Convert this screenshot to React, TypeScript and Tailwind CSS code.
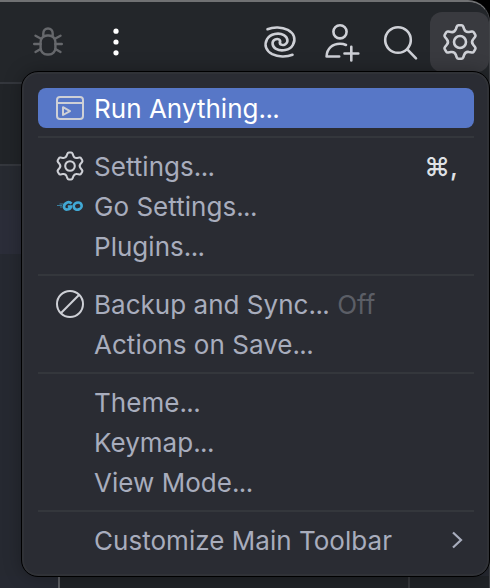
import React from "react";

type IconProps = { className?: string };

const gearPath = (() => {
  const lobe: [number, number][] = [
    [-4.2, -12.8], [-3.2, -15.5], [-2.7, -16.8], [-1.5, -16.8],
    [1.5, -16.8], [2.7, -16.8], [3.2, -15.5], [4.2, -12.8], [5.3, -9.5],
  ];
  let d = "";
  for (let k = 0; k < 6; k++) {
    const a = (k * Math.PI) / 3;
    const p = lobe.map(([x, y]) =>
      `${(x * Math.cos(a) - y * Math.sin(a)).toFixed(2)} ${(x * Math.sin(a) + y * Math.cos(a)).toFixed(2)}`);
    d += `${k === 0 ? "M" : ""}${p[0]} L${p[1]} Q${p[2]} ${p[3]} L${p[4]} Q${p[5]} ${p[6]} L${p[7]} Q${p[8]} `;
  }
  return d + "-4.2 -12.8Z";
})();

function Gear({ className }: IconProps) {
  return (
    <svg className={className} viewBox="-20 -20 40 40" fill="none" stroke="currentColor" strokeWidth="2.6" strokeLinejoin="round">
      <path d={gearPath} />
      <circle r="6" />
    </svg>
  );
}

function Bug() {
  return (
    <svg className="size-8" viewBox="0 0 32 32" fill="none" stroke="currentColor" strokeWidth="2.4" strokeLinecap="round">
      <path d="M11.3 9.500V7.500C11.300 4.500 13.200 2.500 16 2.500S20.700 4.500 20.700 7.500V9.500" />
      <rect x="8.600" y="9.500" width="14.800" height="19" rx="6.500" />
      <path d="M8.600 12.500L3.500 9.700M8.600 18H2.200M8.600 23L3.500 26M23.400 12.500L28.500 9.700M23.400 18H29.800M23.400 23L28.500 26" />
    </svg>
  );
}

function Spiral() {
  const arm = "M-12.500 -12.800C-6.500 -15.300 2 -15 7.800 -12.200C14 -9 16.200 -3 12.900 2.800C9.800 8.400 1.200 9.800 -3.900 6.900C-8.200 4.300 -8.500 -.500 -5.200 -2.300C-2.200 -3.900 .700 -2.500 0 0";
  return (
    <svg className="size-10" viewBox="-20 -20 40 40" fill="none" stroke="currentColor" strokeWidth="2.6" strokeLinecap="round">
      <path d={arm} />
      <path d={arm} transform="rotate(180)" />
    </svg>
  );
}

function AddUser() {
  return (
    <svg className="size-10" viewBox="0 0 40 40" fill="none" stroke="currentColor" strokeWidth="2.6" strokeLinecap="round" strokeLinejoin="round">
      <circle cx="18" cy="9.800" r="6.600" />
      <path d="M17.200 34.500H4.600C4.800 26.500 10.500 21.800 18 21.800C20.700 21.800 22.300 22.200 24 23M29.300 24.800V38.500M22.500 31.500H36.300" />
    </svg>
  );
}

function Search() {
  return (
    <svg className="size-10" viewBox="0 0 40 40" fill="none" stroke="currentColor" strokeWidth="2.6" strokeLinecap="round">
      <circle cx="18" cy="18" r="12.800" />
      <path d="M27.300 27.300L36 36.300" />
    </svg>
  );
}

function RunWindow() {
  return (
    <svg className="h-7 w-8 text-[#ced0d6]" viewBox="0 0 32 28" fill="none" stroke="currentColor" strokeWidth="2" strokeLinejoin="round">
      <rect x="3" y="3" width="26" height="22" rx="3" />
      <path d="M3 9H29M9 13.200V21L16 17.100Z" />
    </svg>
  );
}

function GoMark() {
  return (
    <svg className="h-6 w-8" viewBox="0 0 32 24" fill="none" stroke="#41a9d5">
      <path d="M3 11.500H8M5.500 10H9M6 13H8.500" strokeWidth="1" opacity=".65" />
      <path d="M17.500 9.700C14.800 6.600 10 9 10 12.700C10 16.600 16.200 16.400 17 12.500H13.800" strokeWidth="2.700" />
      <ellipse cx="23.700" cy="12.100" rx="4" ry="3.500" strokeWidth="2.700" transform="rotate(-20 23.700 12.100)" />
    </svg>
  );
}

function Disabled() {
  return (
    <svg className="size-8" viewBox="0 0 32 32" fill="none" stroke="currentColor" strokeWidth="2">
      <circle cx="16" cy="16" r="13" />
      <path d="M6.800 25.200L25.200 6.800" />
    </svg>
  );
}

type RowProps = { icon?: React.ReactNode; label: string; more?: boolean; selected?: boolean; children?: React.ReactNode };

function Row({ icon, label, more, selected, children }: RowProps) {
  return (
    <div className={`flex h-10 items-center rounded-lg px-4 ${selected ? "bg-[#5777c7] text-white" : "text-[#a8adbd]"}`}>
      <span className="mr-2 flex w-8 shrink-0 justify-center text-[#ced0d6]">{icon}</span>
      <span className="whitespace-nowrap pt-0.5">
        {label}
        {more && <span className="tracking-[-0.6px]">...</span>}
      </span>
      {children}
    </div>
  );
}

const Divider = () => <div className="my-2 h-0.5 bg-[#34373c]" />;

export default function App() {
  return (
    <div className="relative h-[588px] w-[490px] overflow-hidden bg-black font-['Inter',sans-serif]">
      <div className="flex h-[588px] flex-col overflow-hidden rounded-tr-[22px] border-t-2 border-r border-t-[#707173] border-r-[#414347] bg-[#212428]">
        <header className="flex h-[82px] shrink-0 items-start border-b-2 border-[#34373d] bg-[#23262a] text-[#ced0d6]">
          <div className="ml-8 mt-6 text-[#66686c]"><Bug /></div>
          <svg className="ml-11 mt-6 h-8 w-4 text-white" viewBox="0 0 16 32" fill="currentColor">
            <circle cx="8" cy="5.200" r="2.600" />
            <circle cx="8" cy="16" r="2.600" />
            <circle cx="8" cy="26.800" r="2.600" />
          </svg>
          <div className="ml-[136px] mt-5"><Spiral /></div>
          <div className="ml-[22px] mt-5"><AddUser /></div>
          <div className="ml-[18px] mt-5"><Search /></div>
          <div className="ml-[10px] mt-[10px] flex h-[60px] w-[59px] shrink-0 items-center justify-center rounded-xl bg-[#393a3f]">
            <Gear className="size-10" />
          </div>
        </header>
        <div className="h-[82px] shrink-0 border-b-2 border-[#34373d]" />
        <div className="h-11 shrink-0 bg-[#272a31]" />
        <div className="h-11 shrink-0 bg-[#2b2d39]" />
        <div className="grow bg-[#262931]" />
        <footer className="flex h-3 shrink-0">
          <div className="w-[58px] bg-[#262932]" />
          <div className="w-[350px] border-l-2 border-[#5a5c61] bg-[#202327]" />
          <div className="grow border-l-2 border-[#34363a] bg-[#202327]" />
        </footer>
      </div>
      <div className="absolute left-[21px] top-[71px] h-[506px] w-[469px] rounded-[17px] border border-black bg-[#2a2c33] py-4 pl-4 pr-[15px] text-[26px] font-[430] leading-10 tracking-[0.03px] shadow-[inset_0_0_0_2px_#303237,0_0_18px_rgba(0,0,0,0.28)]">
        <Row selected icon={<RunWindow />} label="Run Anything" more />
        <Divider />
        <Row icon={<Gear className="size-8" />} label="Settings" more>
          <span className="ml-auto pt-0.5 font-medium text-[#dfe1e5]">⌘,</span>
        </Row>
        <Row icon={<GoMark />} label="Go Settings" more />
        <Row label="Plugins" more />
        <Divider />
        <Row icon={<Disabled />} label="Backup and Sync" more>
          <span className="ml-2 pt-0.5 text-[#5b5e66]">Off</span>
        </Row>
        <Row label="Actions on Save" more />
        <Divider />
        <Row label="Theme" more />
        <Row label="Keymap" more />
        <Row label="View Mode" more />
        <Divider />
        <Row label="Customize Main Toolbar">
          <svg className="-mr-2 ml-auto h-5 w-4" viewBox="0 0 16 20" fill="none" stroke="currentColor" strokeWidth="2.2">
            <path d="M3 2.500L11 10L3 17.500" />
          </svg>
        </Row>
      </div>
    </div>
  );
}
